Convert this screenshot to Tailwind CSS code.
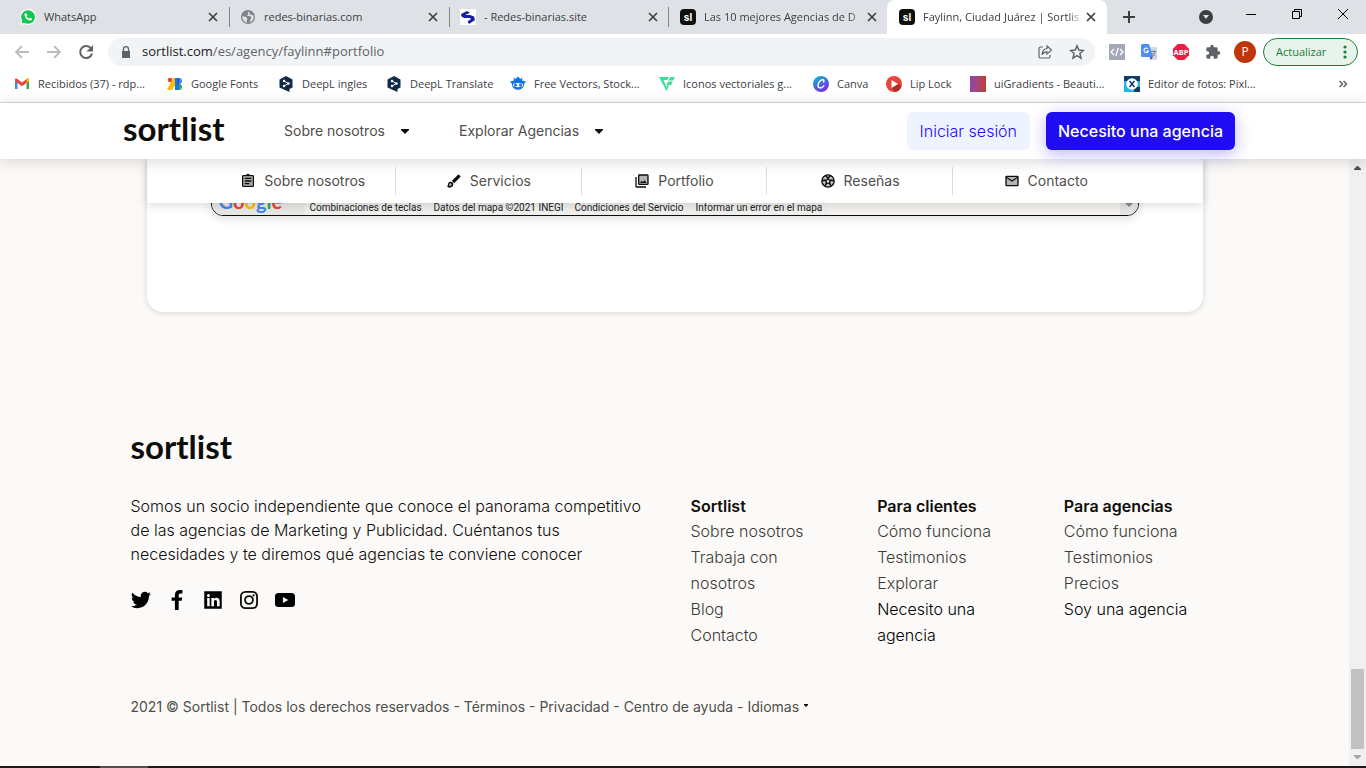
<!DOCTYPE html>
<html lang="es">
<head>
<meta charset="utf-8">
<title>Faylinn, Ciudad Juárez | Sortlist</title>
<script src="https://cdn.jsdelivr.net/npm/@tailwindcss/browser@4"></script>
</head>
<body class="flex h-screen flex-col overflow-hidden bg-white font-['Inter','Liberation_Sans',sans-serif] text-[#0f0d0a]">

<!-- Browser chrome -->
<div class="shrink-0 font-['Open_Sans','Noto_Sans',sans-serif] text-[11px] text-[#3c4043]">
  <!-- Tab strip -->
  <div class="flex h-[34px] items-center bg-[#dee1e6]">
    <div class="flex h-full w-[229px] items-center pl-5 pr-[9px]">
      <svg class="size-4 shrink-0" viewBox="0 0 16 16"><path d="M8 0a8 8 0 0 0-6.900 12L0 16l4.100-1A8 8 0 1 0 8 0z" fill="#fff"/><path d="M8 1.200a6.800 6.800 0 0 0-5.700 10.500L1.600 14.400l2.800-.7A6.800 6.800 0 1 0 8 1.200z" fill="#12c655"/><path d="M5.600 4.300c-.5 0-1.200.8-1.100 1.700.2 2.700 3 5.400 5.800 5.500 1 0 1.700-.7 1.700-1.500 0-.4-1.500-1.200-1.900-1.200-.4 0-.6.9-1 .8-1-.4-1.900-1.300-2.400-2.300-.1-.4.600-.6.600-1S6.500 4.300 5.600 4.300z" fill="#fff"/></svg>
      <span class="ml-2 grow">WhatsApp</span>
      <button aria-label="Cerrar pestaña"><svg class="size-[14px]" viewBox="0 0 14 14" stroke="#3c4043" stroke-width="1.700"><path d="M3 3l8 8M11 3l-8 8"/></svg></button>
    </div>
    <div class="flex h-5 w-[220px] items-center border-l border-[#80868b] pl-2.5 pr-[9px]">
      <svg class="size-4 shrink-0" viewBox="0 0 16 16"><circle cx="8" cy="8" r="7" fill="#808387"/><path d="M9 2.500L7.500 4 8.600 5.400 6.500 7H10l1.500 1.500-1 1.700-1 3.300a5.700 5.700 0 0 0 4-7L12 6l-2-.8zM2.300 7.300l3.400.4 1.800 2-.8 1.300.3 2.600A5.700 5.700 0 0 1 2.300 7.300z" fill="#dee1e6"/></svg>
      <span class="ml-2 grow">redes-binarias.com</span>
      <button aria-label="Cerrar pestaña"><svg class="size-[14px]" viewBox="0 0 14 14" stroke="#3c4043" stroke-width="1.700"><path d="M3 3l8 8M11 3l-8 8"/></svg></button>
    </div>
    <div class="flex h-5 w-[219px] items-center border-l border-[#80868b] pl-2.5 pr-2">
      <svg class="size-4 shrink-0" viewBox="0 0 16 16"><path fill="#fff" d="M0 0h16v16H0z"/><path d="M7 2L1.500 4.800 1 7l3 2h6l1 1-3.500 2.500L9 15l6-4-1-3.500-4-1.500H6.500L5.500 5.500 10 4z" fill="#1420a8"/></svg>
      <span class="ml-2 grow">- Redes-binarias.site</span>
      <button aria-label="Cerrar pestaña"><svg class="size-[14px]" viewBox="0 0 14 14" stroke="#3c4043" stroke-width="1.700"><path d="M3 3l8 8M11 3l-8 8"/></svg></button>
    </div>
    <div class="flex h-5 w-[219px] items-center border-l border-[#80868b] pl-[11px] pr-2">
      <span class="flex size-4 shrink-0 items-center justify-center rounded bg-[#11100d] font-['Inter',sans-serif] text-[10px] font-bold text-white">sl</span>
      <span class="ml-2 min-w-0 grow whitespace-nowrap mask-r-from-90%">Las 10 mejores Agencias de D</span>
      <button aria-label="Cerrar pestaña"><svg class="size-[14px]" viewBox="0 0 14 14" stroke="#3c4043" stroke-width="1.700"><path d="M3 3l8 8M11 3l-8 8"/></svg></button>
    </div>
    <div class="flex h-full w-[220px] items-center rounded-t-lg bg-white pl-3 pr-[9px]">
      <span class="flex size-4 shrink-0 items-center justify-center rounded bg-[#11100d] font-['Inter',sans-serif] text-[10px] font-bold text-white">sl</span>
      <span class="ml-2 min-w-0 grow whitespace-nowrap mask-r-from-90%">Faylinn, Ciudad Juárez | Sortlis</span>
      <button aria-label="Cerrar pestaña"><svg class="size-[14px]" viewBox="0 0 14 14" stroke="#3c4043" stroke-width="1.700"><path d="M3 3l8 8M11 3l-8 8"/></svg></button>
    </div>
    <button class="ml-[15px]" aria-label="Nueva pestaña"><svg class="size-[14px]" viewBox="0 0 14 14" stroke="#3c4043" stroke-width="2"><path d="M7 1v12M1 7h12"/></svg></button>
    <div class="ml-auto flex h-full items-center">
      <button aria-label="Buscar pestañas"><svg class="size-[14px]" viewBox="0 0 14 14"><circle cx="7" cy="7" r="7" fill="#3c4043"/><path d="M4 5h6L7 9z" fill="#dee1e6"/></svg></button>
      <button class="mb-1.5 ml-8" aria-label="Minimizar"><svg class="size-3" viewBox="0 0 12 12" stroke="#000"><path d="M1 6.500h10"/></svg></button>
      <button class="mb-1.5 ml-[34px]" aria-label="Restaurar"><svg class="size-3" viewBox="0 0 12 12" stroke="#000" fill="none"><path d="M1.500 3.500h7v7h-7zM3.500 3.500v-2h7v7h-2"/></svg></button>
      <button class="mb-1.5 ml-[34px] mr-[17px]" aria-label="Cerrar"><svg class="size-3" viewBox="0 0 12 12" stroke="#000"><path d="M1 1l10 10M11 1L1 11"/></svg></button>
    </div>
  </div>

  <!-- Toolbar -->
  <div class="flex h-9 items-center bg-white pl-[14px] pr-2">
    <button aria-label="Atrás"><svg class="size-4" viewBox="0 0 16 16" fill="none" stroke="#babcbe" stroke-width="1.800"><path d="M15 8H2M8 2L2 8l6 6"/></svg></button>
    <button class="ml-4" aria-label="Adelante"><svg class="size-4" viewBox="0 0 16 16" fill="none" stroke="#babcbe" stroke-width="1.800"><path d="M1 8h13M8 2l6 6-6 6"/></svg></button>
    <button class="ml-4" aria-label="Recargar"><svg class="size-4" viewBox="0 0 16 16"><path d="M13 4.500A6 6 0 1 0 14 9.500" fill="none" stroke="#5f6368" stroke-width="2"/><path d="M15 1v6.500H8.500z" fill="#5f6368"/></svg></button>
    <div class="ml-[14px] flex h-7 grow items-center rounded-full bg-[#f1f3f4] pl-3 pr-2.5">
      <svg class="h-3 w-3" viewBox="0 0 12 12"><path d="M2 5h8v7H2z" fill="#5f6368"/><path d="M3.500 5V3.200a2.500 2.500 0 0 1 5 0V5" fill="none" stroke="#5f6368" stroke-width="1.300"/></svg>
      <span class="ml-[10px] grow text-[13px] text-[#5f6368]"><span class="text-[#202124]">sortlist.com</span>/es/agency/faylinn#portfolio</span>
      <button aria-label="Compartir"><svg class="size-4" viewBox="0 0 16 16" fill="none" stroke="#5f6368" stroke-width="1.200"><path d="M6 3H3.500A1.500 1.500 0 0 0 2 4.500v8A1.500 1.500 0 0 0 3.500 14h8a1.500 1.500 0 0 0 1.500-1.500V11M10 2l4.500 4-4.500 4V7.800c-2.500 0-4 1-5 3 .2-3 1.800-5.800 5-6.300z"/></svg></button>
      <button class="ml-4" aria-label="Marcar"><svg class="size-4" viewBox="0 0 16 16" fill="none" stroke="#5f6368" stroke-width="1.500"><path d="M8 1.800l1.800 4.300 4.600.4-3.500 3 1.100 4.600L8 11.700l-4 2.400 1.100-4.600-3.500-3 4.600-.4z"/></svg></button>
    </div>
    <svg class="ml-[14px] size-4" viewBox="0 0 16 16"><path fill="#a3a9b7" d="M0 0h16v16H0z"/><path d="M5 5L2 8l3 3M11 5l3 3-3 3M9.200 4l-2.400 8" fill="none" stroke="#fff" stroke-width="1.300"/></svg>
    <svg class="ml-4 size-4" viewBox="0 0 16 16"><path fill="#d3d8df" d="M6 3h9a1 1 0 0 1 1 1v11a1 1 0 0 1-1 1H9z"/><path fill="#4c8df6" d="M1 0h7l4 13H1a1 1 0 0 1-1-1V1z"/><path fill="#3f51b5" d="M9 13h3l-2.500 3z"/><path d="M7 4.700A2.300 2.300 0 1 0 7.500 7H5.200" fill="none" stroke="#fff" stroke-width="1.100"/><path d="M10 7.500h5M12.500 6.500v1M14 7.500c-.4 2-1.500 3.400-3 4.500M11.500 9c.6 1.400 1.600 2.400 3 3.200" fill="none" stroke="#64748b" stroke-width=".9"/></svg>
    <svg class="ml-4 size-4" viewBox="0 0 16 16"><path fill="#ed1e45" d="M4.700 0h6.600L16 4.700v6.600L11.300 16H4.700L0 11.300V4.700z"/><text x="8" y="10.800" text-anchor="middle" font-family="Open Sans" font-weight="700" font-size="7.500" fill="#fff">ABP</text></svg>
    <svg class="ml-4 size-4" viewBox="0 0 24 24" fill="#5f6368"><path d="M20.500 11H19V7a2 2 0 0 0-2-2h-4V3.500a2.500 2.500 0 0 0-5 0V5H4a2 2 0 0 0-2 2v3.800h1.500a2.700 2.700 0 0 1 0 5.400H2V20a2 2 0 0 0 2 2h3.800v-1.500a2.700 2.700 0 0 1 5.400 0V22H17a2 2 0 0 0 2-2v-4h1.500a2.500 2.500 0 0 0 0-5z"/></svg>
    <span class="ml-[13px] flex size-[22px] items-center justify-center rounded-full bg-[#bf360c] text-xs text-white">P</span>
    <button class="ml-[7px] flex h-7 w-[95px] items-center justify-between rounded-full border border-[#188038] bg-[#e8f3ec] pl-3 pr-2.5 text-[#188038]">Actualizar
      <svg class="h-[14px] w-1" viewBox="0 0 4 14" fill="#188038"><circle cx="2" cy="2" r="1.600"/><circle cx="2" cy="7" r="1.600"/><circle cx="2" cy="12" r="1.600"/></svg></button>
  </div>

  <!-- Bookmarks -->
  <div class="flex h-[33px] items-center whitespace-nowrap border-b border-[#d8dadd] bg-white pb-1 pl-[14px] pr-[18px]">
    <a href="#" class="flex w-[153px] items-center gap-2"><svg class="size-4" viewBox="0 0 16 16"><path fill="#4285f4" d="M1 4v9h2.500V6z"/><path fill="#34a853" d="M15 4v9h-2.500V6z"/><path fill="#ea4335" d="M1 3.500V5l7 5.200L15 5V3.500c0-1-1.200-1.300-2-.7L8 6.600 3 2.800c-.8-.6-2-.3-2 .7z"/><path fill="#fbbc04" d="M12.500 3.200V7L15 5V3.500c0-1.200-1.500-1.300-2.500-.3z"/></svg>Recibidos (37) - rdp...</a>
    <a href="#" class="flex w-[111px] items-center gap-2"><svg class="size-4" viewBox="0 0 16 16"><circle cx="3" cy="4" r="2.300" fill="#ea4335"/><path fill="#fbbc04" d="M6 2h4v4l-5 8H0z"/><path fill="#1a73e8" d="M8 2h4v12H8z"/><path fill="#174ea6" d="M11 2a3 3 0 0 1 0 6z"/><path fill="#34a853" d="M12 8a3 3 0 0 1 0 6z"/><path fill="#4285f4" d="M12 2a3 3 0 0 1 0 6z"/></svg>Google Fonts</a>
    <a href="#" class="flex w-[108px] items-center gap-2"><svg class="size-4" viewBox="0 0 16 16"><path fill="#0f2b46" d="M8 0l6.500 3.500v8L11.500 13v3L8 14.500l-6.500-3v-8z"/><path d="M6 5l4.500 2.500L6 10" fill="none" stroke="#fff"/><circle cx="6" cy="5" r="1.200" fill="#fff"/><circle cx="10.500" cy="7.500" r="1.200" fill="#fff"/><circle cx="6" cy="10" r="1.200" fill="#fff"/></svg>DeepL ingles</a>
    <a href="#" class="flex w-[124px] items-center gap-2"><svg class="size-4" viewBox="0 0 16 16"><path fill="#0f2b46" d="M8 0l6.500 3.500v8L11.500 13v3L8 14.500l-6.500-3v-8z"/><path d="M6 5l4.500 2.500L6 10" fill="none" stroke="#fff"/><circle cx="6" cy="5" r="1.200" fill="#fff"/><circle cx="10.500" cy="7.500" r="1.200" fill="#fff"/><circle cx="6" cy="10" r="1.200" fill="#fff"/></svg>DeepL Translate</a>
    <a href="#" class="flex w-[149px] items-center gap-2"><svg class="size-4" viewBox="0 0 16 16"><path fill="#1273eb" d="M3.500 1.500L5.500 3 8 .5 10.500 3l2-1.500-.5 3 4 1-1.700 2a6 6 0 1 1-12.600 0L0 5.500l4-1z"/><path fill="#fff" d="M3 8c3-1.500 7-1.500 10 0v2c-3 1.500-7 1.500-10 0z"/><circle cx="5.500" cy="9" r="1.500" fill="#1273eb"/><circle cx="10.500" cy="9" r="1.500" fill="#1273eb"/></svg>Free Vectors, Stock...</a>
    <a href="#" class="flex w-[154px] items-center gap-2"><svg class="size-4" viewBox="0 0 16 16" fill="#3ddc97"><path d="M0 1h10L8.300 4H4.500l3 7 1-2 1.500.5L7.500 15z"/><path d="M11.300 1H16l-1.800 3.500H9.500z"/><path d="M9 5.500h4.700L12 9H7.500z"/></svg>Iconos vectoriales g...</a>
    <a href="#" class="flex w-[73px] items-center gap-2"><svg class="size-4" viewBox="0 0 16 16"><defs><linearGradient id="canva" x1="0" y1="0" x2=".6" y2="1"><stop offset="0" stop-color="#00c4cc"/><stop offset="1" stop-color="#7d2ae8"/></linearGradient></defs><circle cx="8" cy="8" r="8" fill="url(#canva)"/><path d="M10.600 5.900c.6-.7.500-2.100-.9-2.100-2.400 0-4.700 3-4.700 5.600 0 3.600 4 3.100 5.800.4" fill="none" stroke="#fff" stroke-width="1.400" stroke-linecap="round"/></svg>Canva</a>
    <a href="#" class="flex w-[84px] items-center gap-2"><svg class="size-4" viewBox="0 0 16 16"><circle cx="8" cy="8" r="8" fill="#e5453b"/><path fill="#b52b27" d="M6 12l6-4 3.500 2A8 8 0 0 1 9 16z"/><path fill="#fff" d="M5.500 4l6.500 4-6.500 4z"/></svg>Lip Lock</a>
    <a href="#" class="flex w-[154px] items-center gap-2"><span class="size-4 bg-linear-to-r from-[#8e44ad] to-[#c0392b]"></span>uiGradients - Beauti...</a>
    <a href="#" class="flex items-center gap-2"><svg class="size-4" viewBox="0 0 16 16"><path fill="#123a63" d="M0 0h16v16H0z"/><path fill="#1fb6e8" d="M0 5h16v6H0zM0 11h10v5H0z"/><circle cx="8" cy="8" r="5.800" fill="#fff"/><path d="M5.500 5l5 6M10.500 5l-5 6" stroke="#123a63" stroke-width="1.500"/></svg>Editor de fotos: Pixl...</a>
    <button class="ml-auto" aria-label="Más marcadores"><svg class="size-[10px]" viewBox="0 0 10 10" fill="none" stroke="#5f6368" stroke-width="1.500"><path d="M1.500 2l3 3-3 3M5.500 2l3 3-3 3"/></svg></button>
  </div>
</div>

<!-- Site header -->
<header class="relative z-20 shrink-0 bg-white pr-4 shadow-[0_2px_14px_rgba(0,0,0,0.16)]">
  <div class="mx-auto flex h-14 max-w-[1120px] items-center pl-2">
    <a href="#" class="w-[161px] pb-1.5 font-['Lato',sans-serif] text-[33px] leading-8 font-bold">sortlist</a>
    <button class="flex w-[175px] items-center gap-4 text-sm text-[#4f4e4a]">Sobre nosotros
      <svg class="h-[5px] w-2" viewBox="0 0 8 5" fill="#0f0d0a"><path d="M0 0h8v1L4 5 0 1z"/></svg></button>
    <button class="flex items-center gap-4 text-sm text-[#4f4e4a]">Explorar Agencias
      <svg class="h-[5px] w-2" viewBox="0 0 8 5" fill="#0f0d0a"><path d="M0 0h8v1L4 5 0 1z"/></svg></button>
    <button class="ml-auto h-[38px] rounded-md bg-[#eff3ff] px-[13px] font-light text-[#1f0cf3]">Iniciar sesión</button>
    <button class="ml-4 h-[38px] rounded-md bg-[#1f0cf3] px-3 font-medium text-white shadow-[0_4px_16px_rgba(31,12,243,0.3)]">Necesito una agencia</button>
  </div>
</header>

<!-- Page viewport -->
<div class="flex min-h-0 grow bg-[#fbfaf8]">
  <div class="min-w-0 grow overflow-hidden">
    <main class="mx-auto max-w-[1056px] rounded-b-2xl bg-white pb-24 shadow-[0_1px_6px_rgba(0,0,0,0.15)]">
      <nav class="relative z-10 grid h-11 grid-cols-5 items-center bg-white px-16 text-sm text-[#4f4e4a] shadow-[0_2px_10px_rgba(0,0,0,0.15)]">
        <a href="#" class="flex h-7 items-center justify-center gap-2 border-r border-[#dededc]">
          <svg class="size-4" viewBox="0 0 24 24" fill="#0f0d0a"><path fill="#a8a8a6" d="M5 5h14v14H5z"/><path d="M7 15h7v2H7zm0-4h10v2H7zm0-4h10v2H7zm12-4h-4.180A3 3 0 0 0 9.180 3H5a2 2 0 0 0-2 2v14a2 2 0 0 0 2 2h14a2 2 0 0 0 2-2V5a2 2 0 0 0-2-2zm0 16H5V5h14z"/></svg>Sobre nosotros</a>
        <a href="#" class="flex h-7 items-center justify-center gap-2 border-r border-[#dededc]">
          <svg class="size-4" viewBox="0 0 24 24" fill="#0f0d0a"><path d="M7 13a4 4 0 0 0-4 4c0 1.500-.8 2.500-1.500 3A5.500 5.500 0 0 0 5.500 22a5.500 5.500 0 0 0 5.500-5 4 4 0 0 0-4-4z"/><path d="M21.500 4.500l-2-2a1 1 0 0 0-1.400 0L8.800 11.800l3.400 3.400 9.300-9.300a1 1 0 0 0 0-1.400z"/><circle cx="6.500" cy="17.500" r="2" fill="#aaa9a6"/></svg>Servicios</a>
        <a href="#" class="flex h-7 items-center justify-center gap-2 border-r border-[#dededc]">
          <svg class="size-4" viewBox="0 0 24 24" fill="#0f0d0a"><path fill="#b4b4b2" d="M7 3h14v14H7z"/><path d="M20 4v12H8V4h12m0-2H8a2 2 0 0 0-2 2v12a2 2 0 0 0 2 2h12a2 2 0 0 0 2-2V4a2 2 0 0 0-2-2zm-8.500 9.670l1.690 2.260 2.480-3.100L19 15H9zM2 6v14a2 2 0 0 0 2 2h14v-2H4V6z"/></svg>Portfolio</a>
        <a href="#" class="flex h-7 items-center justify-center gap-2 border-r border-[#dededc]">
          <svg class="size-4" viewBox="0 0 24 24" fill="none" stroke="#0f0d0a" stroke-width="2"><circle cx="12" cy="12" r="9.200" fill="#c4c4c2"/><path fill="#fff" d="M12 7.500l1.500 3 3.300.4-2.400 2.300.6 3.300-3-1.600-3 1.600.6-3.300-2.400-2.300 3.300-.4z"/><path d="M12 7.500L8 3.800M12 7.500l4-3.700M16.800 10.900l4.400 1M7.200 10.900l-4.400 1M15 16.500l2 3.500M9 16.500L7 20"/></svg>Reseñas</a>
        <a href="#" class="flex h-7 items-center justify-center gap-2">
          <svg class="size-4" viewBox="0 0 24 24" fill="#0f0d0a"><path fill="#b4b4b2" d="M3 5h18v14H3z"/><path d="M22 6a2 2 0 0 0-2-2H4a2 2 0 0 0-2 2v12a2 2 0 0 0 2 2h16a2 2 0 0 0 2-2zm-2 0l-8 5-8-5zm0 12H4V8l8 5 8-5z"/></svg>Contacto</a>
      </nav>

      <!-- Map, scrolled up behind the sticky navigation -->
      <div class="mx-16 -mt-7 flex h-[41px] items-end overflow-hidden rounded-b-xl border border-[#0f0d0a] bg-[#f4f3f0] shadow-[0_3px_8px_rgba(0,0,0,0.12)]">
        <a href="#" aria-label="Google" class="flex h-full w-[93px] items-end bg-[#e8e8e5] pb-0.5 pl-[7px] font-['Lato',sans-serif] text-[20px] leading-6 font-bold"><span class="text-[#4285f4]">G</span><span class="text-[#ea4335]">o</span><span class="text-[#fbbc04]">o</span><span class="text-[#4285f4]">g</span><span class="text-[#34a853]">l</span><span class="text-[#ea4335]">e</span></a>
        <div class="flex h-[14px] items-center bg-[#f0f0ee] pb-0.5 font-['Roboto',sans-serif] text-[10px] text-[#222]">
          <button class="w-[124px] pl-[5px] text-left">Combinaciones de teclas</button>
          <span class="w-[141px] pl-[5px]">Datos del mapa ©2021 INEGI</span>
          <a href="#" class="w-[121px] pl-[5px]">Condiciones del Servicio</a>
          <a href="#" class="w-[138px] pl-[5px]">Informar un error en el mapa</a>
        </div>
        <div class="ml-auto flex h-[14px] w-[18px] justify-center bg-[#e6e6e6] pt-[2px]"><svg class="h-1 w-2" viewBox="0 0 8 4"><path d="M0 0h8L4 4z" fill="#8a8a8a"/></svg></div>
      </div>
    </main>

    <footer class="mx-auto max-w-[1120px] pt-[118px]">
      <a href="#" class="block px-4 font-['Lato',sans-serif] text-[33px] leading-8 font-bold">sortlist</a>
      <div class="mt-8 grid grid-cols-6 leading-6">
        <div class="col-span-3 px-4 font-light">
          <p>Somos un socio independiente que conoce el panorama competitivo de las agencias de Marketing y Publicidad. Cuéntanos tus necesidades y te diremos qué agencias te conviene conocer</p>
          <div class="mt-6 flex gap-4">
            <a href="#" aria-label="Twitter"><svg class="size-5" viewBox="0 0 24 24"><path d="M23.950 4.570a10 10 0 0 1-2.820.77 4.960 4.960 0 0 0 2.160-2.720 9.900 9.900 0 0 1-3.130 1.180 4.920 4.920 0 0 0-8.380 4.480A14 14 0 0 1 1.640 3.160a4.920 4.920 0 0 0 1.520 6.570 4.900 4.900 0 0 1-2.230-.61v.06a4.930 4.930 0 0 0 3.950 4.830 5 5 0 0 1-2.210.08 4.940 4.940 0 0 0 4.600 3.420A9.870 9.870 0 0 1 0 19.540a14 14 0 0 0 7.550 2.210c9.050 0 14-7.500 14-13.980 0-.21 0-.42-.02-.63a9.940 9.940 0 0 0 2.460-2.550z"/></svg></a>
            <a href="#" aria-label="Facebook"><svg class="size-5" viewBox="0 0 24 24"><path d="M9.500 24V13H5.500V9h4V6c0-4 2.300-6 6-6 1.500 0 3 .2 3 .2v3.900h-2c-2 0-2.500 1-2.500 2.400V9h4.300l-.7 4H14v11z"/></svg></a>
            <a href="#" aria-label="LinkedIn"><svg class="size-5" viewBox="0 0 24 24"><path fill-rule="evenodd" d="M1.500 1.500h21v21h-21zM5 9.500v10h3v-10zM6.500 4.700a1.800 1.800 0 1 0 0 3.600 1.800 1.800 0 0 0 0-3.600zM10 9.500v10h3.200v-5c0-1.500.5-2.500 1.900-2.500 1.300 0 1.700 1 1.700 2.500v5H20V14c0-3-1-4.700-3.800-4.700-1.500 0-2.500.7-3 1.600V9.500z"/></svg></a>
            <a href="#" aria-label="Instagram"><svg class="size-5" viewBox="0 0 24 24" fill="none" stroke="#0f0d0a" stroke-width="2.200"><rect x="2.300" y="2.300" width="19.400" height="19.400" rx="5.500"/><circle cx="12" cy="12" r="4.700"/><circle cx="17.500" cy="6.500" r="1.300" fill="#0f0d0a" stroke="none"/></svg></a>
            <a href="#" aria-label="YouTube"><svg class="size-5" viewBox="0 0 24 24"><path fill-rule="evenodd" d="M4 3.500h16c2.500 0 4 1.500 4 4v9c0 2.500-1.500 4-4 4H4c-2.500 0-4-1.500-4-4v-9c0-2.500 1.500-4 4-4zM9.500 8.300v7.400L16 12z"/></svg></a>
          </div>
        </div>
        <div class="px-4">
          <h2 class="font-semibold">Sortlist</h2>
          <ul class="leading-[26px] font-light text-[#3b3a36]">
            <li><a href="#">Sobre nosotros</a></li>
            <li><a href="#">Trabaja con nosotros</a></li>
            <li><a href="#">Blog</a></li>
            <li><a href="#">Contacto</a></li>
          </ul>
        </div>
        <div class="px-4">
          <h2 class="font-semibold">Para clientes</h2>
          <ul class="leading-[26px] font-light text-[#3b3a36]">
            <li><a href="#">Cómo funciona</a></li>
            <li><a href="#">Testimonios</a></li>
            <li><a href="#">Explorar</a></li>
            <li><a href="#" class="text-black">Necesito una agencia</a></li>
          </ul>
        </div>
        <div class="px-4">
          <h2 class="font-semibold">Para agencias</h2>
          <ul class="leading-[26px] font-light text-[#3b3a36]">
            <li><a href="#">Cómo funciona</a></li>
            <li><a href="#">Testimonios</a></li>
            <li><a href="#">Precios</a></li>
            <li><a href="#" class="text-black">Soy una agencia</a></li>
          </ul>
        </div>
      </div>
      <div class="mt-[47px] flex px-4 text-sm leading-6 text-[#4f4e4a]">
        <p>2021 © Sortlist | Todos los derechos reservados - <a href="#">Términos</a> - <a href="#">Privacidad</a> - <a href="#">Centro de ayuda</a> -&nbsp;</p>
        <button class="flex items-center gap-[5px]">Idiomas <svg class="mb-1 h-[3px] w-1" viewBox="0 0 4 3" fill="#0f0d0a"><path d="M0 0h4v1L2 3 0 1z"/></svg></button>
      </div>
    </footer>
  </div>

  <!-- Scrollbar -->
  <div class="flex w-[17px] shrink-0 flex-col items-center bg-[#f0f0f0]">
    <svg class="mt-[7px] h-1 w-[7px]" viewBox="0 0 7 4"><path d="M3 0h1l3 3v1H0V3z" fill="#505050"/></svg>
    <div class="mt-auto h-20 w-[13px] bg-[#c1c1c1]"></div>
    <svg class="mt-1.5 mb-[7px] h-1 w-[7px]" viewBox="0 0 7 4"><path d="M0 0h7v1L4 4H3L0 1z" fill="#a3a3a3"/></svg>
  </div>
</div>

<!-- Taskbar edge -->
<div class="flex h-0.5 shrink-0 bg-[#1d1b1a] pl-[100px]"><div class="w-12 bg-[#51504e]"></div></div>
</body>
</html>
